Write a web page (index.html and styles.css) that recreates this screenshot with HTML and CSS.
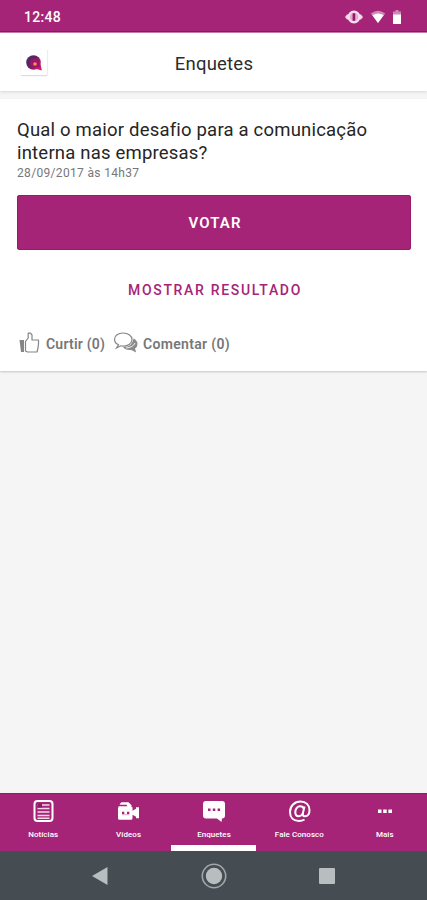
FILE: index.html
```html
<!DOCTYPE html>
<html lang="pt-BR">
<head>
<meta charset="utf-8">
<title>Enquetes</title>
<link rel="stylesheet" href="styles.css">
</head>
<body>
<div class="screen">
  <div class="status">
    <span class="clock">12:48</span>
    <div class="status-icons">
      <svg width="18" height="14" viewBox="0 0 18 14"><path d="M0 7l2-2.500h3v5H2zM18 7l-2-2.500h-3v5h3z" fill="#f5d3e9"/><circle cx="9" cy="7" r="5.400" fill="#e2aed0" stroke="#f8dff0" stroke-width="2.200"/><rect x="7.600" y="3.200" width="2.600" height="7.600" rx=".5" fill="#981568"/></svg>
      <svg width="16" height="14" viewBox="0 0 16 14"><path d="M.8 3.500Q8-1.800 15.200 3.500L8 13z" fill="#d189b8"/><path d="M2.400 5.200Q8 1.800 13.600 5.200L8 13z" fill="#fff"/></svg>
      <svg width="8" height="14" viewBox="0 0 8 14"><path d="M2.500 0h3v1.500H8V5H0V1.500h2.500z" fill="#d189b8"/><path d="M0 4.500h8V14H0z" fill="#fff"/></svg>
    </div>
  </div>
  <header class="header">
    <div class="logo">
      <svg width="18" height="17" viewBox="0 0 18 17"><defs><linearGradient id="g" x1="0" y1="0" x2="1" y2=".7"><stop offset="0" stop-color="#3c3970"/><stop offset=".45" stop-color="#592361"/><stop offset="1" stop-color="#cf1664"/></linearGradient></defs><circle cx="8.500" cy="8.500" r="7.300" fill="url(#g)"/><path d="M10 14.500l5.500-4.500 1.300 6.500z" fill="#c71868"/><path d="M5 8.500q0-4 4-4 5 0 5 5l1 3.500H9q-4 0-4-4.500z" fill="#a0136c"/><circle cx="10" cy="10" r="1.800" fill="#e89a4d"/></svg>
    </div>
    <h1 class="title">Enquetes</h1>
  </header>
  <main class="content">
    <article class="card">
      <h2 class="question">Qual o maior desafio para a comunicação<br>interna nas empresas?</h2>
      <p class="date">28/09/2017 às 14h37</p>
      <button class="vote">VOTAR</button>
      <button class="results">MOSTRAR RESULTADO</button>
      <div class="actions">
        <svg class="like" width="22" height="22" viewBox="0 0 22 22"><path d="M.5 8h4.500v12h-3z" fill="#858585"/><path d="M6.500 19V9.500L9.200 6V1.200h2.300L13 3v5h6.500v4l-.5 4-1 4H8.500z" fill="none" stroke="#858585" stroke-width="1.200" stroke-linejoin="round"/></svg>
        <span class="like-label">Curtir (0)</span>
        <svg class="comment" width="26" height="22" viewBox="0 0 26 22"><path d="M20.500 6.500q4 2 4 5.500 0 3-2.500 4.500l1.200 4-5-2.500q-6 .5-8.200-3 9 .5 10.500-8.500z" fill="#8b8b8b"/><path d="M5.500 12.800Q1.500 11 1.500 7.200C1.500 3.500 5.300 1 10 1s9 2.500 9 6.500-4 6.600-8.500 6.600q-1.800 0-2.700-.3L3.500 16z" fill="#fff" stroke="#858585" stroke-width="1.200"/><path d="M13 16q7-.5 9-5" fill="none" stroke="#fff" stroke-width=".9"/></svg>
        <span class="comment-label">Comentar (0)</span>
      </div>
    </article>
  </main>
  <nav class="tabs">
    <a class="tab">
      <svg width="22" height="24" viewBox="0 0 22 24"><rect x="2.500" y="2" width="18" height="20" rx="3" fill="#a62477" stroke="#fff" stroke-width="2"/><path d="M5.500 6h12M5.500 9.500h12M5.500 13h12M5.500 16.500h12M5.500 19.200h12" stroke="#f5d7e9" stroke-width="1.400"/><path d="M5.500 4.700H10v3.800H5.500z" fill="#852060"/></svg>
      <span>Notícias</span>
    </a>
    <a class="tab">
      <svg width="22" height="24" viewBox="0 0 22 24"><g transform="translate(.5 1.200)"><path d="M2 4l2-2h7l3 3v2H1V6h9L9 4.500H3zM.5 8q0-1.500 1.500-1.500h12q1 0 1 1v3l3.500-2v-1.500h3v11h-3V16.500L15 14.500V18q0 1.500-1.500 1.500H2Q.5 19.500.5 18z" fill="#fff"/><path d="M4.500 11.500h2.300v2.300H4.500zM9.500 11.500h2.300v2.300H9.500z" fill="#a62477"/><path d="M4.500 14.500h7.500" stroke="#dda4c8"/></g></svg>
      <span>Vídeos</span>
    </a>
    <a class="tab active">
      <svg width="24" height="24" viewBox="0 0 24 24"><g transform="translate(1 .5)"><path d="M4 1.500h16q3 0 3 3V16q0 3-3 3l-.5 3.500-4.500-3.500H4q-3 0-3-3V4.500q0-3 3-3z" fill="#fff"/><path d="M6 9h2.500v2.500H6zM10.800 9h2.500v2.500h-2.500zM15.600 9h2.500v2.500h-2.500z" fill="#a62477"/></g></svg>
      <span>Enquetes</span>
    </a>
    <a class="tab">
      <svg width="24" height="24" viewBox="0 0 24 24"><g transform="translate(1 .5)" fill="none" stroke="#fff" stroke-width="2"><path d="M16.500 20Q14 21.600 11 21.600C5.500 21.600 2 18 2 12.500 2 6.500 6.500 2 12.500 2 18 2 21.500 5.500 21.500 10.500c0 4-2 6.300-4.500 6.300-2 0-2.600-1.300-2.100-3.400L16.500 7"/><path d="M15.900 9.500q-.9-2.700-3.700-2.700c-3 0-4.900 3-4.900 5.900 0 2.500 1.300 4 3.400 4 2.300 0 3.800-1.600 4.500-3.700"/></g></svg>
      <span>Fale Conosco</span>
    </a>
    <a class="tab">
      <svg width="16" height="24" viewBox="0 0 16 24"><path d="M2 10.500h3.500V14H2zM7.200 10.500h3.500V14H7.200zM12.400 10.500H16V14h-3.600z" fill="#fff"/></svg>
      <span>Mais</span>
    </a>
  </nav>
  <div class="system">
    <svg width="16" height="18" viewBox="0 0 16 18"><path d="M0 9L15.500 0v18z" fill="#b8bdbf"/></svg>
    <svg width="26" height="26" viewBox="0 0 26 26"><circle cx="13" cy="13" r="11.700" fill="none" stroke="#a0a6a9" stroke-width="1.600"/><circle cx="13" cy="13" r="8.200" fill="#b8bdbf"/></svg>
    <svg width="16" height="16" viewBox="0 0 16 16"><rect width="16" height="16" rx="1" fill="#b8bdbf"/></svg>
  </div>
</div>
</body>
</html>
```
FILE: styles.css
```css
* { box-sizing: border-box; }
body { margin: 0; font-family: Roboto, sans-serif; background: #f5f5f5; }
h1, h2, p { margin: 0; font-weight: 400; }
svg { display: block; flex: none; }
button { display: block; border: 0; font: inherit; padding: 0; }
.screen { width: 427px; height: 900px; display: flex; flex-direction: column; overflow: hidden; }
.status { height: 33px; flex: none; background: #a62477; border-bottom: 1px solid #c77cae; box-shadow: inset 0 -1px #971269; display: flex; justify-content: space-between; align-items: center; padding: 2px 26px 0 24px; color: #fff; }
.clock { font-size: 14px; font-weight: 500; letter-spacing: .3px; }
.status-icons { display: flex; align-items: center; gap: 7px; }
.header { height: 58px; flex: none; background: #fff; display: grid; grid-template-columns: 26px 1fr 26px; align-items: center; padding: 0 21px; box-shadow: 0 1px 3px rgba(0,0,0,.12); z-index: 1; }
.logo { width: 26px; height: 25px; padding: 4px 4px 3px; background: #fff; box-shadow: 0 1px 1px #ddd, 1px 0 1px #eee; }
.title { font-size: 18.500px; letter-spacing: .2px; color: #2c2c2c; text-align: center; padding: 4px 0 0 1px; }
.content { flex: 1; padding-top: 8px; background: #f5f5f5; }
.card { height: 272px; background: #fff; padding: 20px 16px 0 17px; box-shadow: 0 1px 2px rgba(0,0,0,.2); }
.question { font-size: 18.500px; line-height: 23px; letter-spacing: .2px; color: #252525; white-space: nowrap; }
.date { font-size: 12px; line-height: 16px; letter-spacing: .33px; color: #777; }
.vote { width: 394px; height: 55px; margin-top: 14px; border-radius: 3px; background: #a62477; color: #fff; font-size: 15px; font-weight: 600; letter-spacing: 1.1px; padding: 1px 0 0 2px; box-shadow: inset 0 0 0 1px #9a196b; }
.results { width: 100%; height: 36px; margin-top: 22px; padding-left: 2px; background: none; color: #a62477; font-size: 14px; font-weight: 500; letter-spacing: 1.68px; }
.actions { display: flex; align-items: center; margin: 24px 0 0 2px; color: #777; font-size: 14px; font-weight: 600; white-space: nowrap; }
.like-label { flex: none; width: 72px; padding: 1px 0 0 5px; letter-spacing: .22px; }
.comment-label { padding: 1px 0 0 4px; letter-spacing: .32px; }
.tabs { height: 58px; flex: none; background: #a62477; display: grid; grid-template-columns: repeat(5, 1fr); box-shadow: inset 0 1px #98186a; }
.tab { display: flex; flex-direction: column; align-items: center; padding-top: 6px; color: #fff; font-size: 8px; font-weight: 500; border-bottom: 6px solid transparent; }
.tab span { margin-top: 7px; padding-left: 1px; line-height: 10px; letter-spacing: .05px; white-space: nowrap; }
.active { border-bottom-color: #fff; }
.system { height: 49px; flex: none; background: #454d52; display: grid; grid-template-columns: 113px 1fr 113px; place-items: center; padding: 0 43.500px; }
```
